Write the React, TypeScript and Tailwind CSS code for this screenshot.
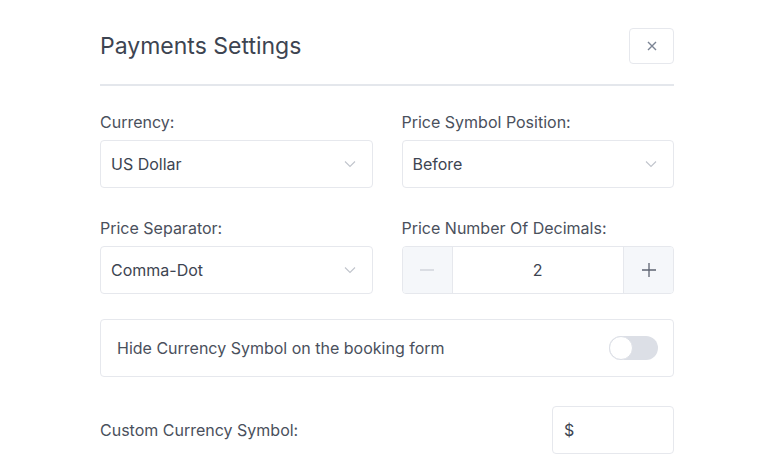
import { useState } from 'react'

function Chevron() {
  return (
    <svg width="12" height="8" viewBox="0 0 12 8" fill="none" className="text-[#c0c4cc]">
      <path d="M1 1.5l5 5 5-5" stroke="currentColor" strokeWidth="1.1" />
    </svg>
  )
}

function SelectBox({ value }: { value: string }) {
  return (
    <div className="flex h-12 items-center justify-between rounded border border-[#e6e8ed] bg-white pl-[10px] pr-[16px] text-base text-[#3d4451]">
      <span>{value}</span>
      <Chevron />
    </div>
  )
}

function Label({ children }: { children: React.ReactNode }) {
  return <div className="mb-2 h-5 text-base leading-5 text-[#4a505c]">{children}</div>
}

export default function App() {
  const [decimals, setDecimals] = useState(2)
  const [hideSymbol, setHideSymbol] = useState(false)

  return (
    <div className="min-h-[459px] bg-white font-['Inter','Liberation_Sans',Arial,sans-serif]">
      <div className="ml-[100px] w-[574px] pt-7">
        {/* header */}
        <div className="flex items-center justify-between">
          <h2 className="text-[23px] leading-7 text-[#3d4451]">Payments Settings</h2>
          <button className="flex h-9 w-[45px] items-center justify-center rounded border border-[#e6e8ed] bg-white text-[#7b8494]">
            <svg width="10" height="10" viewBox="0 0 10 10">
              <path d="M1 1l8 8M9 1l-8 8" stroke="currentColor" strokeWidth="1.4" />
            </svg>
          </button>
        </div>
        <div className="mt-5 h-[2px] bg-[#e4e7ec]" />

        <div className="mt-[26px] grid grid-cols-2 gap-x-[29px] gap-y-[30px]">
          <div>
            <Label>Currency:</Label>
            <SelectBox value="US Dollar" />
          </div>
          <div>
            <Label>Price Symbol Position:</Label>
            <SelectBox value="Before" />
          </div>
          <div>
            <Label>Price Separator:</Label>
            <SelectBox value="Comma-Dot" />
          </div>
          <div>
            <Label>Price Number Of Decimals:</Label>
            <div className="flex h-12 overflow-hidden rounded border border-[#e6e8ed] bg-white">
              <button
                onClick={() => setDecimals(d => Math.max(0, d - 1))}
                className="flex w-[50px] items-center justify-center border-r border-[#e6e8ed] bg-[#f5f7fa] text-[#c0c4cc]"
              >
                <svg width="14" height="2" viewBox="0 0 14 2">
                  <path d="M0 1h14" stroke="currentColor" strokeWidth="1.2" />
                </svg>
              </button>
              <div className="flex flex-1 items-center justify-center text-base text-[#3d4451]">{decimals}</div>
              <button
                onClick={() => setDecimals(d => d + 1)}
                className="flex w-[50px] items-center justify-center border-l border-[#e6e8ed] bg-[#f5f7fa] text-[#5d6472]"
              >
                <svg width="14" height="14" viewBox="0 0 14 14">
                  <path d="M0 7h14M7 0v14" stroke="currentColor" strokeWidth="1.3" />
                </svg>
              </button>
            </div>
          </div>
        </div>

        {/* hide symbol toggle */}
        <div className="mt-[25px] flex h-[58px] items-center justify-between rounded border border-[#e6e8ed] pl-[16px] pr-[15px]">
          <span className="text-base text-[#4a505c]">Hide Currency Symbol on the booking form</span>
          <button
            onClick={() => setHideSymbol(v => !v)}
            className={`relative h-6 w-[49px] rounded-full ${hideSymbol ? 'bg-[#409eff]' : 'bg-[#dcdfe6]'}`}
          >
            <span
              className={`absolute top-0 h-6 w-6 rounded-full border border-[#dcdfe6] bg-white ${hideSymbol ? 'left-[25px]' : 'left-0'}`}
            />
          </button>
        </div>

        {/* custom symbol */}
        <div className="mt-[29px] flex items-center justify-between">
          <span className="text-base text-[#4a505c]">Custom Currency Symbol:</span>
          <div className="flex h-12 w-[122px] items-center rounded border border-[#e6e8ed] px-[11px] text-base text-[#3d4451]">
            $
          </div>
        </div>
      </div>
    </div>
  )
}
